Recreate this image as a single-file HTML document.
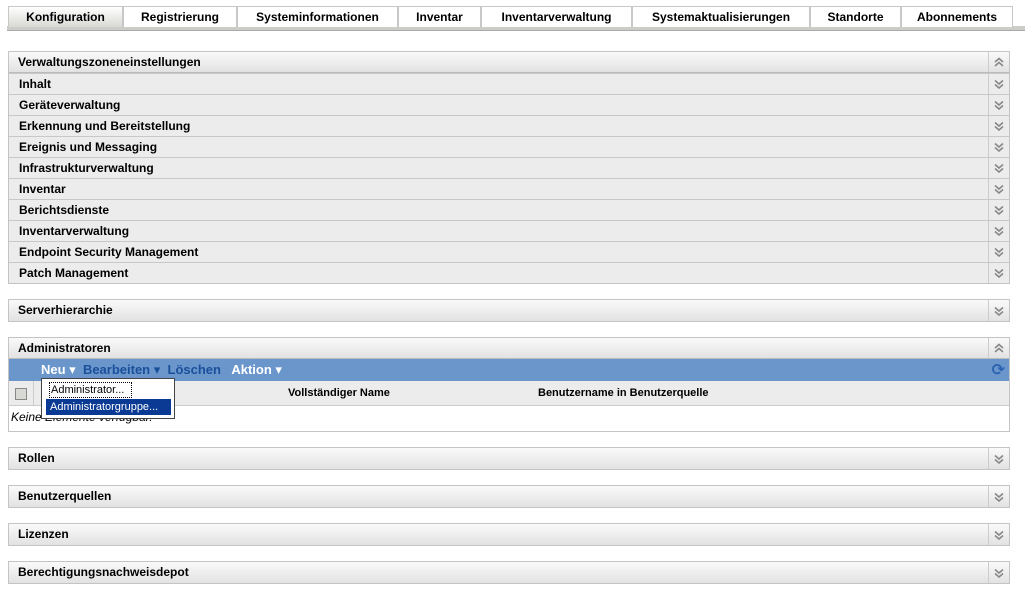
<!DOCTYPE html>
<html><head><meta charset="utf-8"><style>
*{box-sizing:border-box;margin:0;padding:0}
body{width:1031px;height:599px;background:#fff;font-family:"Liberation Sans","DejaVu Sans",sans-serif;font-size:12px;color:#000;position:relative;overflow:hidden}
.tab{position:absolute;top:6px;height:21px;border:1px solid #c8c8c8;border-bottom:none;background:#fff;font-weight:bold;text-align:center;line-height:20px}
.tab.act{background:linear-gradient(#fff,#d8d8d4)}
.tbar{position:absolute;left:7px;top:26px;width:1018px;height:5px;background:#ccccc8;border-bottom:1px solid #aaa}
.p{position:absolute;left:8px;width:1002px;border:1px solid #c4c4c4}
.h{height:21px;background:linear-gradient(#fafafa,#e2e2e2);font-weight:bold;padding-left:9px;line-height:21px;position:relative;border-bottom:1px solid #bbb}
.r{height:21px;background:#ececec;border-top:1px solid #c8c8c8;font-weight:bold;padding-left:10px;line-height:20px;position:relative}
.c{position:absolute;right:0;top:0;width:21px;height:100%;border-left:1px solid #ccc}
.c svg{position:absolute;left:5px;top:50%;margin-top:-5px}
</style></head><body>
<svg width="0" height="0" style="position:absolute"><defs>
<symbol id="dn" viewBox="0 0 10 10"><path d="M1 1.5L5 5L9 1.5M1 5.5L5 9L9 5.5" fill="none" stroke="#888" stroke-width="1.6"/></symbol>
<symbol id="up" viewBox="0 0 10 10"><path d="M1 5L5 1.5L9 5M1 9L5 5.5L9 9" fill="none" stroke="#888" stroke-width="1.6"/></symbol>
</defs></svg>
<div class="tbar"></div>
<div class="tab act" style="left:8px;width:115px">Konfiguration</div>
<div class="tab" style="left:123px;width:114px">Registrierung</div>
<div class="tab" style="left:237px;width:161px">Systeminformationen</div>
<div class="tab" style="left:398px;width:83px">Inventar</div>
<div class="tab" style="left:481px;width:151px">Inventarverwaltung</div>
<div class="tab" style="left:632px;width:178px">Systemaktualisierungen</div>
<div class="tab" style="left:810px;width:91px">Standorte</div>
<div class="tab" style="left:901px;width:112px">Abonnements</div>

<div class="p" style="top:51px">
<div class="h">Verwaltungszoneneinstellungen<span class="c"><svg width="10" height="10"><use href="#up"/></svg></span></div>
<div class="r">Inhalt<span class="c"><svg width="10" height="10"><use href="#dn"/></svg></span></div>
<div class="r">Geräteverwaltung<span class="c"><svg width="10" height="10"><use href="#dn"/></svg></span></div>
<div class="r">Erkennung und Bereitstellung<span class="c"><svg width="10" height="10"><use href="#dn"/></svg></span></div>
<div class="r">Ereignis und Messaging<span class="c"><svg width="10" height="10"><use href="#dn"/></svg></span></div>
<div class="r">Infrastrukturverwaltung<span class="c"><svg width="10" height="10"><use href="#dn"/></svg></span></div>
<div class="r">Inventar<span class="c"><svg width="10" height="10"><use href="#dn"/></svg></span></div>
<div class="r">Berichtsdienste<span class="c"><svg width="10" height="10"><use href="#dn"/></svg></span></div>
<div class="r">Inventarverwaltung<span class="c"><svg width="10" height="10"><use href="#dn"/></svg></span></div>
<div class="r">Endpoint Security Management<span class="c"><svg width="10" height="10"><use href="#dn"/></svg></span></div>
<div class="r">Patch Management<span class="c"><svg width="10" height="10"><use href="#dn"/></svg></span></div>
</div>

<div class="p" style="top:299px"><div class="h" style="border:none">Serverhierarchie<span class="c"><svg width="10" height="10"><use href="#dn"/></svg></span></div></div>

<div class="p" style="top:337px;height:95px">
<div class="h">Administratoren<span class="c"><svg width="10" height="10"><use href="#up"/></svg></span></div>
<div style="height:22px;background:#6b96cc;font-weight:bold;font-size:13px;line-height:22px;padding-left:32px;position:relative">
<span style="color:#fff">Neu ▾</span>&nbsp; <span style="color:#1a4f9a">Bearbeiten ▾</span>&nbsp; <span style="color:#1a4f9a">Löschen</span>&nbsp;&nbsp; <span style="color:#fff">Aktion ▾</span>
<span style="position:absolute;right:4px;top:1px;color:#2a63b0;font-size:16px">⟳</span></div>
<div style="height:25px;background:#ececec;border-bottom:1px solid #ccc;font-weight:bold;font-size:11px;line-height:25px;position:relative">
<span style="position:absolute;left:6px;top:7px;width:12px;height:12px;border:1px solid #888;background:#d8d8d4"></span>
<span style="position:absolute;left:24px;top:0;height:25px;border-left:1px solid #ccc"></span>
<span style="position:absolute;left:279px">Vollständiger Name</span>
<span style="position:absolute;left:529px">Benutzername in Benutzerquelle</span></div>
<div style="font-style:italic;padding-left:2px;line-height:22px">Keine Elemente verfügbar.</div>
</div>
<div style="position:absolute;left:41px;top:378px;width:134px;height:41px;background:#fff;border:1px solid #444;font-size:11px">
<div style="margin:3px 0 0 7px;width:83px;height:16px;border:1px dotted #000;line-height:14px;padding-left:1px">Administrator...</div>
<div style="margin:1px 0 0 4px;width:125px;height:16px;background:#0a3a94;color:#fff;line-height:16px;padding-left:4px">Administratorgruppe...</div>
</div>

<div class="p" style="top:447px"><div class="h" style="border:none">Rollen<span class="c"><svg width="10" height="10"><use href="#dn"/></svg></span></div></div>
<div class="p" style="top:485px"><div class="h" style="border:none">Benutzerquellen<span class="c"><svg width="10" height="10"><use href="#dn"/></svg></span></div></div>
<div class="p" style="top:523px"><div class="h" style="border:none">Lizenzen<span class="c"><svg width="10" height="10"><use href="#dn"/></svg></span></div></div>
<div class="p" style="top:561px"><div class="h" style="border:none">Berechtigungsnachweisdepot<span class="c"><svg width="10" height="10"><use href="#dn"/></svg></span></div></div>
</body></html>
